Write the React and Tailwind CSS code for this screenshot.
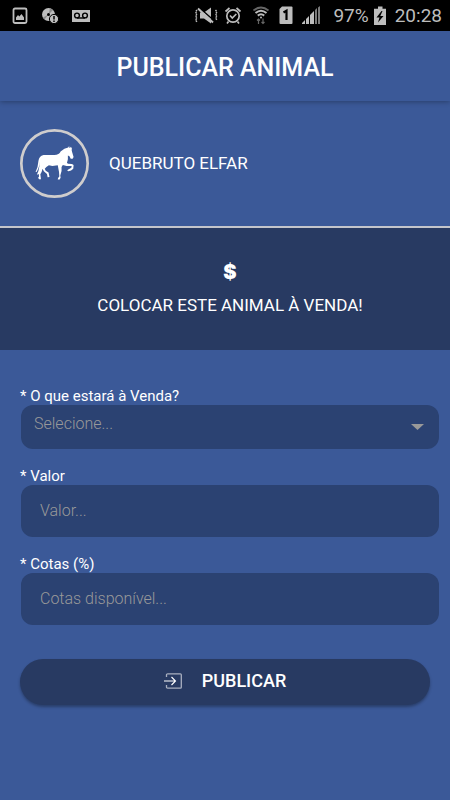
import React from 'react';

function StatusBar() {
  return (
    <div className="flex h-[31px] items-center justify-between bg-black pl-3 pr-2 text-[#bdbdbd]">
      <div className="flex items-center gap-[13px]">
        <svg className="h-[21px] w-4" viewBox="0 0 16 21" fill="none">
          <rect x="1.5" y="3.5" width="13" height="14.5" rx="1.5" stroke="currentColor" strokeWidth="1.8" />
          <path d="M4 15v-2.5l2-2.500 1.300 1.500 2.200-2.500 2.500 3.500V15z" fill="currentColor" />
        </svg>
        <svg className="h-[21px] w-[18px]" viewBox="0 0 18 21" fill="none">
          <circle cx="7.500" cy="9.500" r="6.500" fill="currentColor" />
          <path d="M7.500 9.500 9 3.300 12 5zM7.500 9.500 2 12.500l1.500 2z" fill="#8a8a8a" />
          <circle cx="7.500" cy="9.500" r="1.500" fill="black" />
          <circle cx="13" cy="14" r="4.600" fill="#bdbdbd" stroke="black" />
          <path d="M13 11v3.600M13 15.500v1.400" stroke="black" strokeWidth="1.500" />
        </svg>
        <svg className="h-[21px] w-[18px]" viewBox="0 0 18 21" fill="none">
          <rect y="5" width="18" height="12" fill="currentColor" />
          <circle cx="5" cy="10.500" r="2.400" stroke="black" strokeWidth="1.400" />
          <circle cx="13" cy="10.500" r="2.400" stroke="black" strokeWidth="1.400" />
          <path d="M5 13h8" stroke="black" strokeWidth="1.400" />
        </svg>
      </div>

      <div className="flex items-center text-[19px] leading-none">
        <svg className="h-[21px] w-7" viewBox="0 0 28 21" fill="none" stroke="currentColor">
          <path d="M7 7.500h4l7-5v16l-7-5H7z" fill="currentColor" stroke="none" />
          <path d="M6 2.500 21 15.500" stroke="black" strokeWidth="1.500" />
          <path d="M5 3.500 20 17.500" strokeWidth="2" />
          <path d="m4 5-1.500 2L4 9l-1.500 2L4 13l-1.500 2L4 17M22.500 5 24 7l-1.500 2 1.500 2-1.500 2 1.500 2" strokeWidth="1.400" strokeDasharray="1.800 .8" />
        </svg>
        <svg className="h-[21px] w-6" viewBox="0 0 24 21" fill="none" stroke="currentColor" strokeWidth="1.700">
          <circle cx="12" cy="11" r="6.200" />
          <path d="m9 10.500 2.300 2.500 4-4M4.500 6.500l4-3.500M19.500 6.500l-4-3.500M7.500 16.500l-1.500 2M16.500 16.500l1.500 2" />
        </svg>
        <svg className="h-[21px] w-7" viewBox="0 0 28 21" fill="none" stroke="currentColor">
          <path d="M8.500 5.500q7.500-6 15 0" stroke="#666" strokeWidth="1.800" />
          <path d="M10.500 8q5.500-4.500 11 0M12.800 10.600q3.200-2.600 6.400 0" strokeWidth="2" />
          <circle cx="16" cy="12.500" r="1" fill="currentColor" stroke="none" />
          <path d="M13.500 19v-5m-1.500 1.500 1.500-1.500 1.500 1.500M18 13.500v5M16.500 17l1.500 1.500 1.500-1.500" stroke="#666" strokeWidth="1.200" />
        </svg>
        <svg className="h-[21px] w-6" viewBox="0 0 24 21" fill="none">
          <path d="M9 1.500h9.500q1 0 1 1v15.500q0 1-1 1H7.500q-1 0-1-1V4z" fill="currentColor" />
          <path d="m10.500 7.500 3-1.800V15" stroke="black" strokeWidth="2.200" />
        </svg>
        <svg className="h-[21px] w-7" viewBox="0 0 28 21" fill="currentColor">
          <path d="M5 19v-1l3-3v4zM9 19v-5l3-3v8zM13 19v-9l4-4v13z" />
          <path d="M18 19V5l2-2v16zM21 19V2.500L23 1v18z" fill="#7a7a7a" />
        </svg>
        <span className="ml-2">97%</span>
        <svg className="mx-1 h-[21px] w-[14px]" viewBox="0 0 14 21" fill="currentColor">
          <path d="M5 1.500h4.500v2.300H13V20H1V3.800h4z" />
          <path d="M8.500 6 3.500 12.500h3L5 17.500l5.500-6.500H7.300L9.500 6z" fill="black" />
        </svg>
        <span className="ml-1">20:28</span>
      </div>
    </div>
  );
}

function HorseAvatar() {
  return (
    <svg className="size-[69px] shrink-0" viewBox="15 12 207 207" role="img" aria-label="Animal">
      <circle cx="118.500" cy="115.500" r="99.500" fill="none" stroke="#cfcdcd" strokeWidth="8" />
      <g transform="translate(57 45) scale(.95)">
        <path
          fill="white"
          d="M112 26L115 21L117 26L120 22L119 32L121 40L125 54L122 59L116 59L112 51L107 49L107 61L104 73L108 75L120 76L125 79L124 91L117 96L109 99L105 97L107 94L118 88L119 82L103 82L91 79L87 85L87 98L83 112L84 119L81 125L75 125L76 120L80 115L79 101L75 80L58 82L47 80L39 85L34 91L37 97L46 103L49 117L43 118L41 107L31 99L27 91L24 101L20 108L22 124L16 124L13 119L16 115L15 107L9 110L14 98L17 82L19 67Q16 89 8 101L5 101Q13 84 14 66Q16 50 30 47L64 47Q80 46 84 36Q96 26 108 24L111 19Z"
        />
      </g>
    </svg>
  );
}

function Field({ id, label, children }) {
  return (
    <div>
      <label htmlFor={id} className="block text-[15px] leading-[18px] text-white">
        * {label}
      </label>
      <div className="relative ml-px">{children}</div>
    </div>
  );
}

function TextField({ id, label, placeholder }) {
  return (
    <Field id={id} label={label}>
      <input
        id={id}
        type="text"
        placeholder={placeholder}
        className="block h-[52px] w-full rounded-xl bg-[#2b4272] px-[19px] pb-[2px] text-base font-light text-white outline-none placeholder:text-[#999999]"
      />
    </Field>
  );
}

export default function App() {
  return (
    <div className="min-h-screen bg-[#3b5998] font-['Roboto',sans-serif] text-white">
      <StatusBar />

      <header className="flex h-[70px] items-center justify-center pt-1 shadow-[0_1px_5px_rgba(0,0,0,0.3)]">
        <h1 className="text-[25px] font-medium">PUBLICAR ANIMAL</h1>
      </header>

      <section className="flex items-center gap-5 border-b-2 border-[#c4c5cb] px-5 pb-7 pt-7">
        <HorseAvatar />
        <h2 className="text-[17px]">QUEBRUTO ELFAR</h2>
      </section>

      <section className="flex flex-col items-center bg-[#283a62] pb-8 pl-[10px] pt-8">
        <span className="font-['Inter',sans-serif] text-xl font-black leading-6">$</span>
        <p className="mt-2 text-[17px] leading-[26px]">COLOCAR ESTE ANIMAL À VENDA!</p>
      </section>

      <form className="pt-[37px]" onSubmit={(e) => e.preventDefault()}>
        <div className="flex flex-col gap-[18px] pl-5 pr-[11px]">
          <Field id="sale" label="O que estará à Venda?">
            <select
              id="sale"
              defaultValue=""
              className="block h-11 w-full appearance-none rounded-xl bg-[#2b4272] pb-[6px] pl-[13px] pr-10 text-base font-light text-[#999999] outline-none"
            >
              <option value="">Selecione...</option>
            </select>
            <svg className="pointer-events-none absolute right-[15px] top-[19px] h-[6px] w-[13px]" viewBox="0 0 13 6">
              <path d="M0 0h13L6.500 6z" fill="#999999" />
            </svg>
          </Field>
          <TextField id="price" label="Valor" placeholder="Valor..." />
          <TextField id="shares" label="Cotas (%)" placeholder="Cotas disponível..." />
        </div>

        <div className="px-5 pt-[34px]">
          <button
            type="submit"
            className="flex h-[46px] w-full items-center justify-center gap-5 rounded-full bg-[#283a62] pb-[2px] text-lg font-medium shadow-[0_2px_3px_rgba(0,0,0,0.3)]"
          >
            <svg className="h-4 w-[18px]" viewBox="0 0 18 16" fill="none">
              <path d="M2.500 4V2q0-1.200 1.200-1.200h12.600q1 0 1 1v12.400q0 1-1 1H3.700q-1.200 0-1.200-1.200v-2" stroke="#a9b0c0" strokeWidth="1.300" />
              <path d="M0 8h11.500M7.500 4l4 4-4 4" stroke="white" strokeWidth="1.100" />
            </svg>
            PUBLICAR
          </button>
        </div>
      </form>
    </div>
  );
}
